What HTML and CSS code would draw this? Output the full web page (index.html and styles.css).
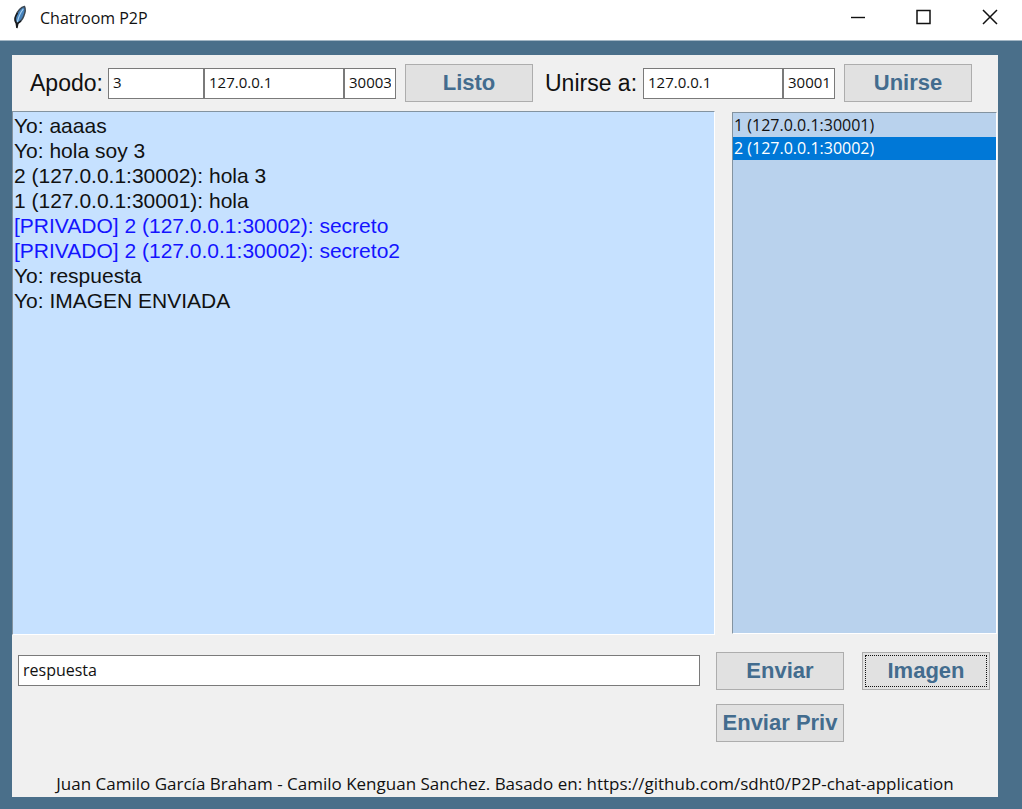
FILE: index.html
```html
<!DOCTYPE html>
<html lang="es">
<head>
<meta charset="utf-8">
<meta name="viewport" content="width=device-width, initial-scale=1">
<title>Chatroom P2P</title>
<link rel="stylesheet" href="styles.css">
</head>
<body>
<div class="window">
  <header class="titlebar">
    <svg class="feather" viewBox="0 0 16 24" width="16" height="24" aria-hidden="true">
      <path d="M12.500 1.500C9 2 5.500 6 4.200 10C3.200 13 3 15.500 4.200 17.500L5.200 18.500C8.500 17 10.500 14.500 11.800 11C13 8 13.800 4 12.500 1.500Z" fill="#4583bd" stroke="#3b4650" stroke-width="1.500"/>
      <path d="M11.300 4C8.500 7.500 6.500 12 5.300 17" fill="none" stroke="#a9d2f2" stroke-width="1.200"/>
      <path d="M5.500 8L3.300 12C2.600 14.500 3 16.500 4.200 18L4.900 23L5.800 18.500L9 16" fill="none" stroke="#17191c" stroke-width="1.500"/>
    </svg>
    <h1 class="title">Chatroom P2P</h1>
    <div class="window-controls">
      <button class="window-button" type="button" aria-label="Minimizar"><svg viewBox="0 0 18 18" width="18" height="18"><path d="M2 9.500H16" stroke="#111" stroke-width="1.400"/></svg></button>
      <button class="window-button" type="button" aria-label="Maximizar"><svg viewBox="0 0 18 18" width="18" height="18"><rect x="2" y="2.500" width="13" height="13" fill="none" stroke="#111" stroke-width="1.500"/></svg></button>
      <button class="window-button" type="button" aria-label="Cerrar"><svg viewBox="0 0 18 18" width="18" height="18"><path d="M2 2L16 16M16 2L2 16" stroke="#111" stroke-width="1.500"/></svg></button>
    </div>
  </header>
  <main class="frame">
    <div class="panel">
      <div class="toolbar">
        <form class="connection">
          <label class="label" for="nick">Apodo:</label>
          <div class="fields">
            <input class="field field-nick" id="nick" type="text" value="3">
            <input class="field field-host" type="text" value="127.0.0.1" aria-label="Dirección propia">
            <input class="field field-port" type="text" value="30003" aria-label="Puerto propio">
          </div>
          <button class="button" type="button">Listo</button>
        </form>
        <form class="connection connection-join">
          <label class="label" for="peer">Unirse a:</label>
          <div class="fields">
            <input class="field field-host" id="peer" type="text" value="127.0.0.1">
            <input class="field field-port" type="text" value="30001" aria-label="Puerto remoto">
          </div>
          <button class="button" type="button">Unirse</button>
        </form>
      </div>
      <div class="workspace">
        <section class="chat" aria-label="Mensajes">
          <p class="message">Yo: aaaas</p>
          <p class="message">Yo: hola soy 3</p>
          <p class="message">2 (127.0.0.1:30002): hola 3</p>
          <p class="message">1 (127.0.0.1:30001): hola</p>
          <p class="message message-private">[PRIVADO] 2 (127.0.0.1:30002): secreto</p>
          <p class="message message-private">[PRIVADO] 2 (127.0.0.1:30002): secreto2</p>
          <p class="message">Yo: respuesta</p>
          <p class="message">Yo: IMAGEN ENVIADA</p>
        </section>
        <select class="peers" size="10" aria-label="Usuarios conectados">
          <option class="peer">1 (127.0.0.1:30001)</option>
          <option class="peer" selected>2 (127.0.0.1:30002)</option>
        </select>
      </div>
      <form class="composer">
        <input class="field field-message" type="text" value="respuesta" aria-label="Mensaje">
        <div class="actions">
          <button class="button" type="button">Enviar</button>
          <button class="button button-focused" type="button">Imagen</button>
          <button class="button" type="button">Enviar Priv</button>
        </div>
      </form>
      <footer class="credits">Juan Camilo García Braham - Camilo Kenguan Sanchez. Basado en: https://github.com/sdht0/P2P-chat-application</footer>
    </div>
  </main>
</div>
</body>
</html>
```

FILE: styles.css
```css
* {
  box-sizing: border-box;
}

body {
  margin: 0;
  font-family: "Open Sans", "Noto Sans", sans-serif;
  color: #111;
}

.window {
  display: flex;
  flex-direction: column;
  min-height: 100vh;
  background: #4a6f8a;
}

.titlebar {
  display: flex;
  align-items: center;
  height: 41px;
  padding: 0 16px 6px 12px;
  background: #fff;
  border-bottom: 1px solid #a4b7c5;
}

.feather {
  margin-right: 12px;
}

.title {
  flex: 1;
  margin: 0;
  padding-top: 2px;
  font-size: 16px;
  line-height: 24px;
  font-weight: 400;
}

.window-controls {
  display: flex;
  gap: 34px;
}

.window-button {
  display: flex;
  align-items: center;
  justify-content: center;
  width: 32px;
  height: 32px;
  padding: 0;
  border: 0;
  background: none;
}

.frame {
  flex: 1;
  display: flex;
  padding: 14px 24px 12px 12px;
}

.panel {
  flex: 1;
  display: flex;
  flex-direction: column;
  min-width: 0;
  background: #f0f0f0;
}

.toolbar {
  display: flex;
  gap: 12px;
  height: 56px;
  padding-left: 18px;
  align-items: center;
}

.connection {
  display: flex;
  align-items: center;
  gap: 9px;
}

.label {
  width: 69px;
  font: 23px "Liberation Sans", Arial, sans-serif;
  white-space: nowrap;
}

.connection-join .label {
  width: 89px;
}

.fields {
  display: flex;
}

.field {
  height: 31px;
  padding: 0 4px 2px;
  border: 1px solid #7a7a7a;
  border-radius: 0;
  background: #fff;
  color: #111;
  font: 15px "Open Sans", "Noto Sans", sans-serif;
}

.field-nick {
  width: 96px;
}

.field-host {
  width: 140px;
}

.field-port {
  width: 52px;
}

.button {
  width: 128px;
  height: 38px;
  padding: 0;
  border: 1px solid #adadad;
  background: #e1e1e1;
  color: #436c8e;
  font: bold 22px "Liberation Sans", Arial, sans-serif;
  white-space: nowrap;
}

.button-focused {
  outline: 1px dotted #111;
  outline-offset: -4px;
}

.workspace {
  flex: 1;
  display: flex;
  gap: 17px;
  padding-right: 1px;
}

.chat {
  flex: 1;
  padding: 1px;
  border: 1px solid #fff;
  border-top-color: #8393a0;
  border-left-color: #8393a0;
  background: #c6e1ff;
  font: 21px/25px "Liberation Sans", Arial, sans-serif;
}

.message {
  margin: 0;
}

.message-private {
  color: #1414ff;
}

.peers {
  width: 265px;
  margin: 1px 0;
  padding: 1px 0;
  border: 1px solid #fff;
  border-top-color: #8393a0;
  border-left-color: #8393a0;
  border-radius: 0;
  background: #b9d2ed;
  color: #111;
  font: 16px/23px "Open Sans", "Noto Sans", sans-serif;
  overflow: auto;
  outline: 0;
}

.peer {
  min-height: 23px;
  padding: 0 1px;
  line-height: 23px;
}

.peer:checked {
  background: #0078d7 linear-gradient(#0078d7, #0078d7);
  color: #fff;
  -webkit-text-fill-color: #fff;
}

.composer {
  display: flex;
  gap: 16px;
  padding: 17px 8px 0 6px;
}

.field-message {
  flex: 1;
  min-width: 0;
  margin-top: 3px;
  font-size: 16px;
}

.actions {
  display: grid;
  grid-template-columns: 128px 128px;
  gap: 14px 18px;
}

.credits {
  padding: 30px 0 1px;
  font-size: 17px;
  line-height: 24px;
  text-align: center;
}
```
